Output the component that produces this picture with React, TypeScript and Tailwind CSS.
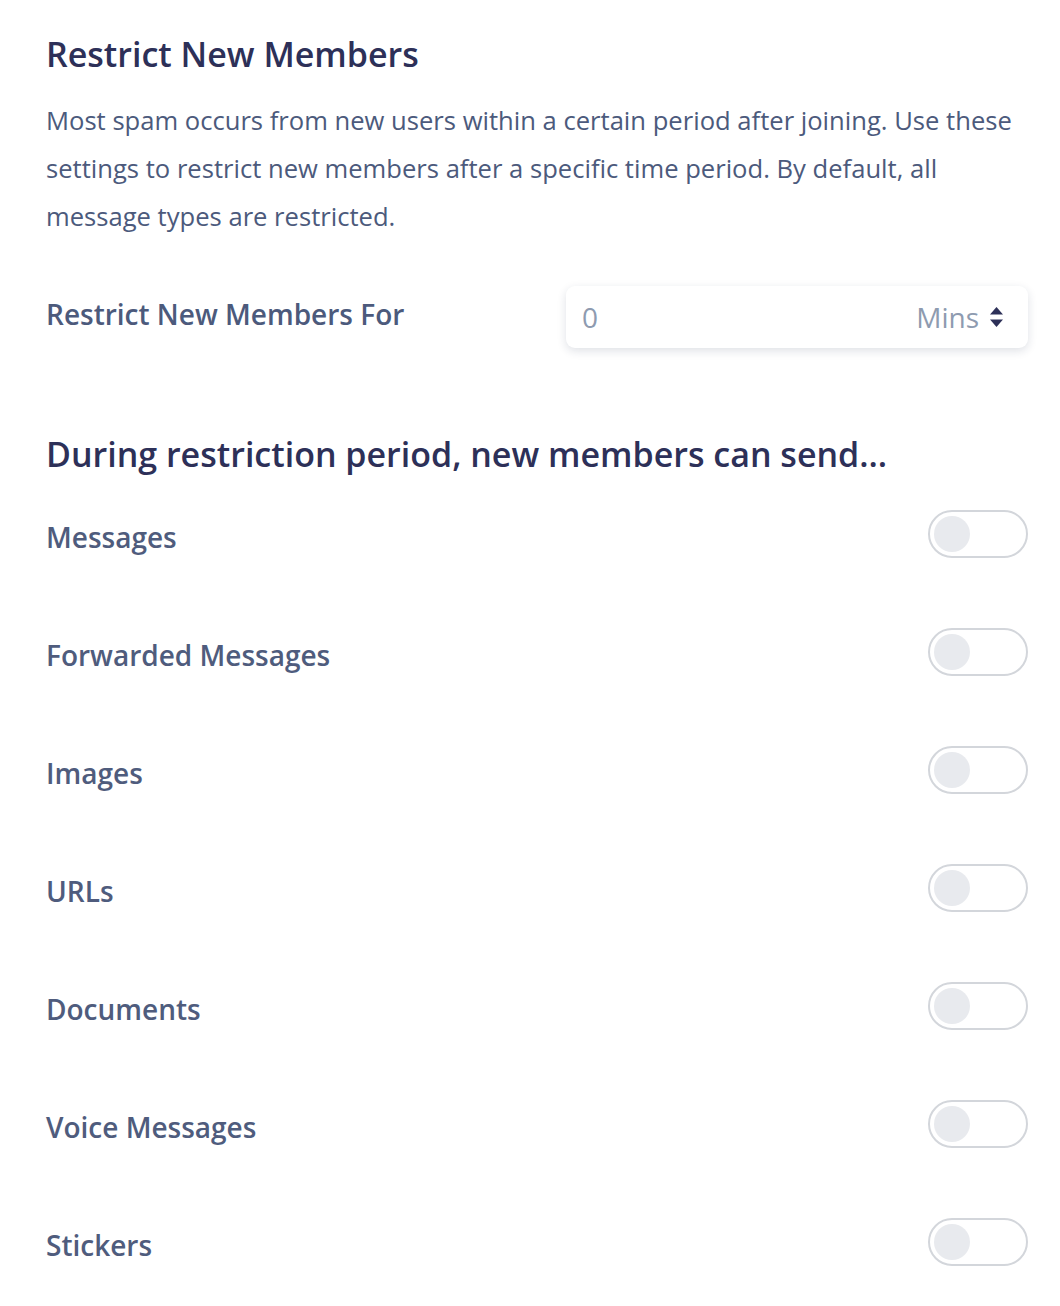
import React from "react";

const items = [
  "Messages",
  "Forwarded Messages",
  "Images",
  "URLs",
  "Documents",
  "Voice Messages",
  "Stickers",
];

const Toggle = () => (
  <div className="w-[100px] h-[48px] rounded-full border-2 border-[#d3d6db] bg-white flex items-center px-[4px]">
    <div className="w-[36px] h-[36px] rounded-full bg-[#e8eaee]" />
  </div>
);

export default function App() {
  return (
    <div
      className="min-h-screen bg-white pl-[46px] pr-[32px] pt-[30px]"
      style={{ fontFamily: '"Open Sans", "Noto Sans", sans-serif' }}
    >
      {/* Header */}
      <h1 className="text-[34px] leading-[48px] font-semibold text-[#2d3058]">
        Restrict New Members
      </h1>
      <p className="mt-[19px] text-[25.6px] leading-[48px] text-[#4c5a7c]">
        Most spam occurs from new users within a certain period after joining. Use these settings to restrict new members
        after a specific time period. By default, all message types are restricted.
      </p>

      {/* Duration */}
      <div className="mt-[45px] flex items-start justify-between">
        <span className="mt-[7px] text-[28px] font-semibold text-[#4c5a7c]">Restrict New Members For</span>
        <div className="w-[462px] h-[62px] rounded-[9px] bg-white shadow-[0_3px_10px_rgba(30,40,80,0.14)] flex items-center pl-[16px] pr-[24px]">
          <span className="flex-1 text-[28px] text-[#8e9bb0]">0</span>
          <span className="text-[28px] text-[#8e9bb0]">Mins</span>
          <svg className="ml-[10px]" width="15" height="22" viewBox="0 0 15 22">
            <path d="M7.5 1 L14 8.5 L1 8.5 Z" fill="#2d3058" />
            <path d="M7.5 21 L14 13.5 L1 13.5 Z" fill="#2d3058" />
          </svg>
        </div>
      </div>

      {/* Permissions */}
      <h2 className="mt-[82px] text-[34px] leading-[48px] font-semibold text-[#2d3058]">
        During restriction period, new members can send...
      </h2>
      <div className="mt-[32px] flex flex-col gap-[70px]">
        {items.map((item) => (
          <div key={item} className="flex items-center justify-between h-[48px]">
            <span className="pt-[6px] text-[28px] font-semibold text-[#4f5c7d]">{item}</span>
            <Toggle />
          </div>
        ))}
      </div>
    </div>
  );
}
